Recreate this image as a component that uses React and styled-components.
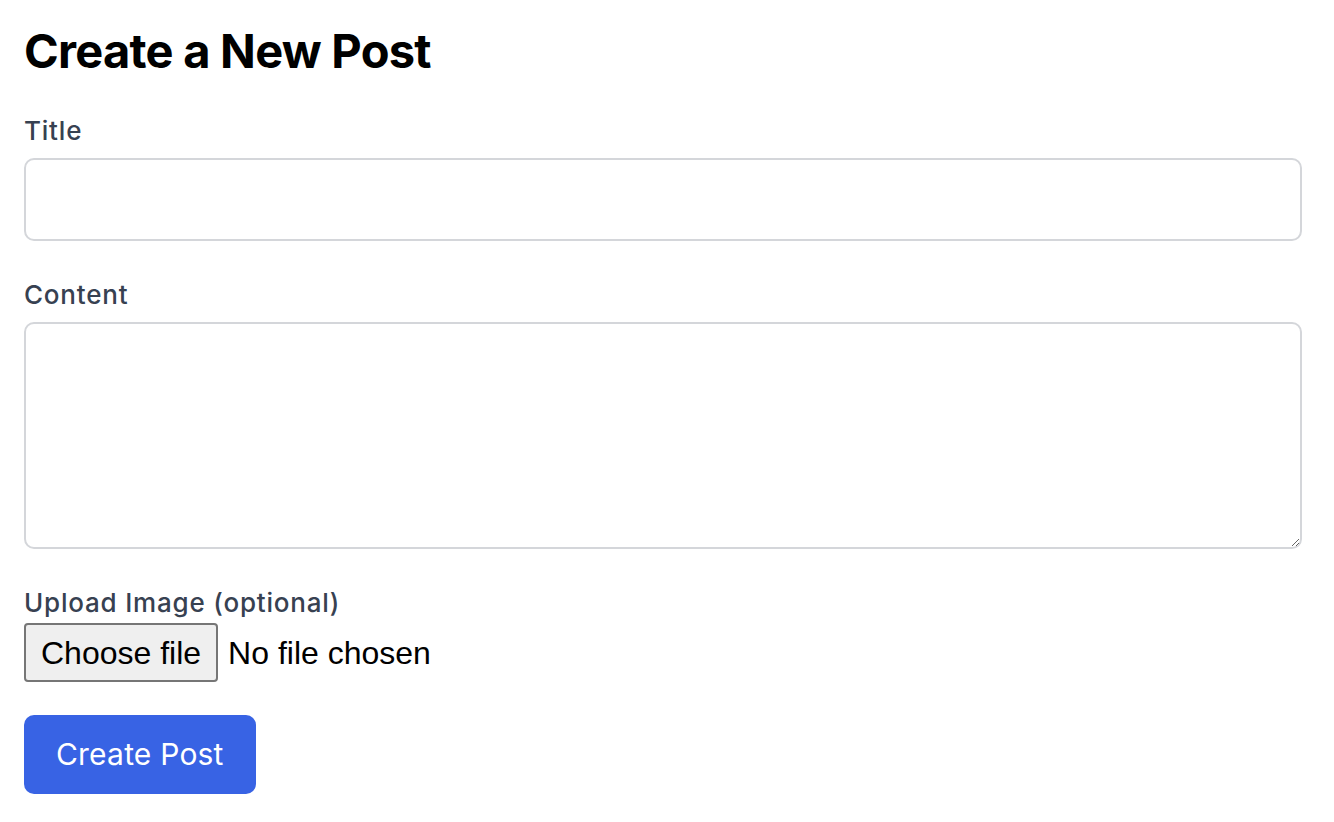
import styled, { createGlobalStyle } from 'styled-components'

const GlobalStyle = createGlobalStyle`
  * {
    box-sizing: border-box;
  }
  body {
    margin: 0;
    background: #ffffff;
    font-family: Inter, 'Noto Sans', sans-serif;
  }
`

const Page = styled.div`
  padding: 22px 32px 24px 24px;
`

const Heading = styled.h1`
  margin: 0 0 34px;
  font-size: 47px;
  line-height: 57px;
  font-weight: 700;
  letter-spacing: -0.75px;
  color: #000000;
`

const Form = styled.form`
  display: flex;
  flex-direction: column;
`

const Field = styled.div`
  display: flex;
  flex-direction: column;
  margin-bottom: ${props => props.$gap ?? 36}px;
`

const Label = styled.label`
  display: block;
  font-size: 26px;
  line-height: 36px;
  font-weight: 500;
  letter-spacing: 0.8px;
  color: #374151;
  margin-bottom: ${props => props.$gap ?? 9}px;
`

const TextInput = styled.input`
  display: block;
  width: 100%;
  height: 83px;
  padding: 0 16px;
  border: 2px solid #d4d6da;
  border-radius: 10px;
  font-family: inherit;
  font-size: 24px;
  outline: none;
`

const TextArea = styled.textarea`
  display: block;
  width: 100%;
  height: 227px;
  padding: 12px 16px;
  border: 2px solid #d4d6da;
  border-radius: 10px;
  font-family: inherit;
  font-size: 24px;
  outline: none;
  resize: vertical;
`

const FileRow = styled.div`
  display: flex;
  align-items: center;
  gap: 10px;
  font-family: 'Liberation Sans', Arial, sans-serif;
  font-size: 32px;
  color: #000000;
`

const FileButton = styled.label`
  display: inline-block;
  padding: 10px 15px 8px;
  line-height: 37px;
  background: #efefef;
  border: 2px solid #767676;
  border-radius: 4px;
  cursor: pointer;
  input {
    display: none;
  }
`

const FileName = styled.span`
  line-height: 37px;
  padding-top: 2px;
`

const SubmitButton = styled.button`
  align-self: flex-start;
  margin-top: 33px;
  padding: 17px 32px;
  line-height: 45px;
  font-family: Inter, 'Noto Sans', sans-serif;
  font-size: 30px;
  font-weight: 400;
  letter-spacing: 0.2px;
  color: #ffffff;
  background: #3863e4;
  border: none;
  border-radius: 10px;
  cursor: pointer;
`

function App() {
  const onSubmit = e => {
    e.preventDefault()
  }
  return (
    <>
      <GlobalStyle />
      <Page>
        <Heading>Create a New Post</Heading>
        <Form onSubmit={onSubmit}>
          <Field>
            <Label htmlFor="title">Title</Label>
            <TextInput id="title" type="text" />
          </Field>
          <Field>
            <Label htmlFor="content">Content</Label>
            <TextArea id="content" />
          </Field>
          <Field $gap={0}>
            <Label $gap={2}>Upload Image (optional)</Label>
            <FileRow>
              <FileButton>
                Choose file
                <input type="file" accept="image/*" />
              </FileButton>
              <FileName>No file chosen</FileName>
            </FileRow>
          </Field>
          <SubmitButton type="submit">Create Post</SubmitButton>
        </Form>
      </Page>
    </>
  )
}

export default App
